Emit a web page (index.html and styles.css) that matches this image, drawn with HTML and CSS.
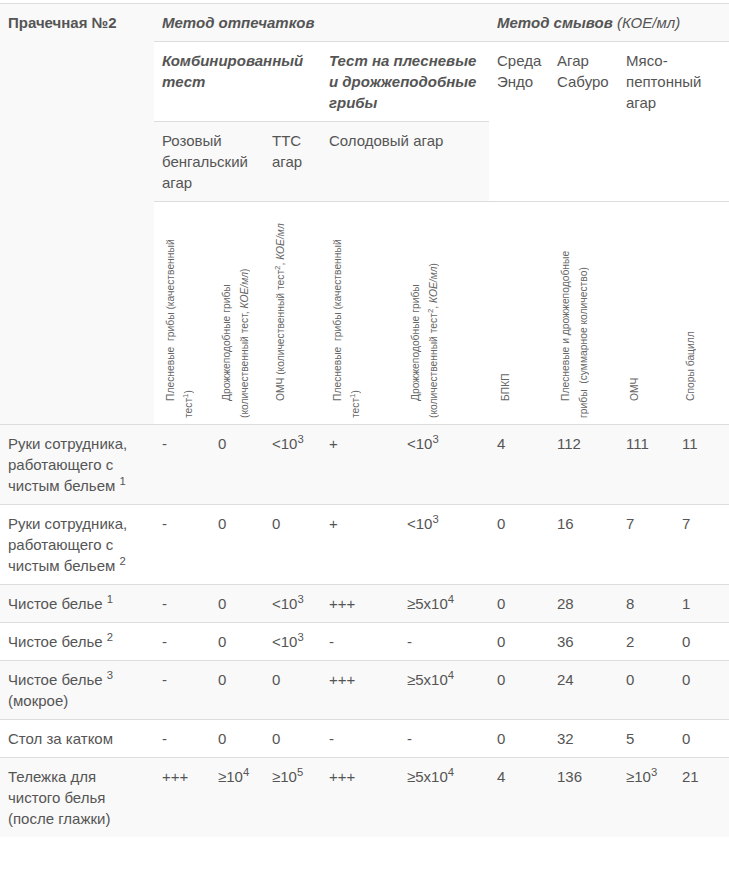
FILE: index.html
```html
<!DOCTYPE html>
<html lang="ru">
<head>
<meta charset="utf-8">
<title>Прачечная №2</title>
<link rel="stylesheet" href="styles.css">
</head>
<body>
<div class="page">
<table class="lab-table">
  <colgroup>
    <col class="c-name"><col class="c2"><col class="c3"><col class="c4"><col class="c5"><col class="c6"><col class="c7"><col class="c8"><col class="c9"><col class="c10">
  </colgroup>
  <tbody>
    <tr>
      <td rowspan="4" class="corner">Прачечная №2</td>
      <td colspan="5"><b><i>Метод отпечатков</i></b></td>
      <td colspan="4"><b><i>Метод смывов</i></b> <i>(КОЕ/мл)</i></td>
    </tr>
    <tr>
      <td colspan="3"><b><i>Комбинированный тест</i></b></td>
      <td colspan="2"><b><i>Тест на плесневые и дрожжеподобные грибы</i></b></td>
      <td rowspan="2">Среда Эндо</td>
      <td rowspan="2">Агар Сабуро</td>
      <td rowspan="2" colspan="2">Мясо-пептонный агар</td>
    </tr>
    <tr>
      <td colspan="2">Розовый бенгальский агар</td>
      <td>ТТС агар</td>
      <td colspan="2">Солодовый агар</td>
    </tr>
    <tr class="rot-row">
      <td><div class="rot">Плесневые&nbsp; грибы (качественный<br>тест<sup>1</sup>)</div></td>
      <td><div class="rot">Дрожжеподобные грибы<br>(количественный тест, <i>КОЕ/мл</i>)</div></td>
      <td><div class="rot">ОМЧ (количественный тест<sup>2</sup>, <i>КОЕ/мл</i></div></td>
      <td><div class="rot">Плесневые&nbsp; грибы (качественный<br>тест<sup>1</sup>)</div></td>
      <td><div class="rot">Дрожжеподобные грибы<br>(количественный тест<sup>2</sup>, <i>КОЕ/мл</i>)</div></td>
      <td><div class="rot">БПКП</div></td>
      <td><div class="rot">Плесневые и дрожжеподобные<br>грибы&nbsp; (суммарное количество)</div></td>
      <td><div class="rot">ОМЧ</div></td>
      <td><div class="rot">Споры бацилл</div></td>
    </tr>
    <tr>
      <td>Руки сотрудника, работающего с чистым бельем <sup>1</sup></td>
      <td>-</td><td>0</td><td>&lt;10<sup>3</sup></td><td>+</td><td>&lt;10<sup>3</sup></td><td>4</td><td>112</td><td>111</td><td>11</td>
    </tr>
    <tr>
      <td>Руки сотрудника, работающего с чистым бельем <sup>2</sup></td>
      <td>-</td><td>0</td><td>0</td><td>+</td><td>&lt;10<sup>3</sup></td><td>0</td><td>16</td><td>7</td><td>7</td>
    </tr>
    <tr>
      <td>Чистое белье <sup>1</sup></td>
      <td>-</td><td>0</td><td>&lt;10<sup>3</sup></td><td>+++</td><td>≥5x10<sup>4</sup></td><td>0</td><td>28</td><td>8</td><td>1</td>
    </tr>
    <tr>
      <td>Чистое белье <sup>2</sup></td>
      <td>-</td><td>0</td><td>&lt;10<sup>3</sup></td><td>-</td><td>-</td><td>0</td><td>36</td><td>2</td><td>0</td>
    </tr>
    <tr>
      <td>Чистое белье <sup>3</sup> (мокрое)</td>
      <td>-</td><td>0</td><td>0</td><td>+++</td><td>≥5x10<sup>4</sup></td><td>0</td><td>24</td><td>0</td><td>0</td>
    </tr>
    <tr>
      <td>Стол за катком</td>
      <td>-</td><td>0</td><td>0</td><td>-</td><td>-</td><td>0</td><td>32</td><td>5</td><td>0</td>
    </tr>
    <tr>
      <td>Тележка для чистого белья (после глажки)</td>
      <td>+++</td><td>≥10<sup>4</sup></td><td>≥10<sup>5</sup></td><td>+++</td><td>≥5x10<sup>4</sup></td><td>4</td><td>136</td><td>≥10<sup>3</sup></td><td>21</td>
    </tr>
  </tbody>
</table>
</div>
</body>
</html>
```

FILE: styles.css
```css
html, body {
  margin: 0;
  padding: 0;
  background: #fff;
}

.page {
  padding-top: 3px;
  font-family: "Liberation Sans", Arial, sans-serif;
  font-size: 15px;
  line-height: 21px;
  color: #555;
}

.lab-table {
  width: 729px;
  table-layout: fixed;
  border-collapse: collapse;
  border-spacing: 0;
}

.c-name { width: 154px; }
.c2 { width: 56px; }
.c3 { width: 54px; }
.c4 { width: 57px; }
.c5 { width: 78px; }
.c6 { width: 90px; }
.c7 { width: 60px; }
.c8 { width: 69px; }
.c9 { width: 56px; }
.c10 { width: 55px; }

.lab-table td {
  padding: 8px;
  border-top: 1px solid #ddd;
  vertical-align: top;
  text-align: left;
}

.lab-table tr:nth-child(odd) > td {
  background: #f9f9f9;
}

.corner {
  font-weight: bold;
}

.rot-row td {
  vertical-align: bottom;
  padding: 8px 8px 6px 8px;
}

.rot {
  writing-mode: vertical-rl;
  transform: rotate(180deg);
  height: 208px;
  font-size: 10.3px;
  line-height: 18px;
  white-space: nowrap;
  text-indent: 17px;
  color: #666;
  overflow: hidden;
}

sup {
  font-size: 75%;
  line-height: 0;
  position: relative;
  vertical-align: baseline;
  top: -0.5em;
}

.rot sup {
  top: 0;
  left: 0.45em;
}
```
